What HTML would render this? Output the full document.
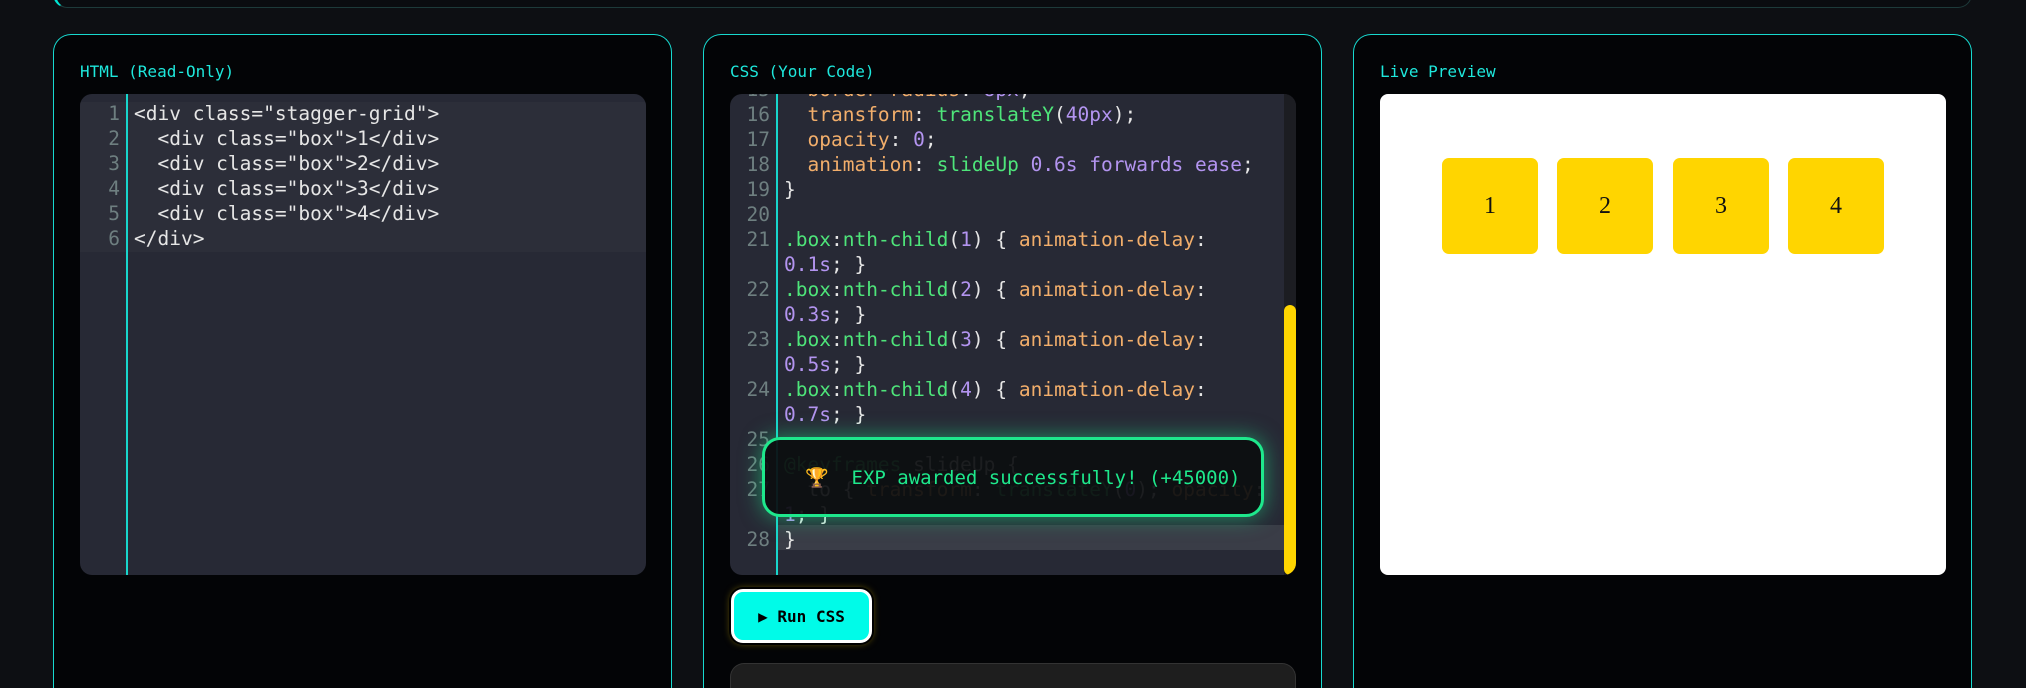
<!DOCTYPE html>
<html style="overflow:hidden;width:2026px;height:688px"><head><meta charset="utf-8"><style>
*{box-sizing:border-box;margin:0;padding:0}
body{width:2026px;height:688px;background:#0d0f13;overflow:hidden;position:relative;font-family:"DejaVu Sans Mono","Liberation Mono",monospace}
.top{position:absolute;left:53px;top:-40px;width:1919px;height:48px;border:1px solid #1d3a3a;border-left:3px solid #00e5d4;border-radius:14px;background:#0a0c10}
.panel{position:absolute;top:34px;width:619px;height:654px;border:1.5px solid #17d9cf;border-bottom:none;border-radius:18px 18px 0 0;background:#030406;overflow:hidden}
.lbl{position:absolute;left:26px;top:27px;color:#1ee8dc;font-size:16px}
.ed{position:absolute;left:26px;top:59px;width:566px;height:481px;background:#272935;border-radius:12px;overflow:hidden}
.gut{position:absolute;left:46px;top:0;bottom:0;width:1.5px;background:#18d6cc}
.ln{position:absolute;left:0;width:40px;text-align:right;color:#6e7f80;font-size:19.5px;line-height:25px}
.cd{position:absolute;left:54px;color:#e6e6e6;font-size:19.5px;line-height:25px;white-space:pre}
.p{color:#f2ae6b}.g{color:#4ee57a}.n{color:#b394f0}
.box{position:absolute;top:64px;width:96px;height:96px;background:#ffd500;border-radius:7px;font-family:"Liberation Serif",serif;font-size:24px;display:flex;align-items:center;justify-content:center;color:#111}
</style></head><body>
<div class="top"></div>

<div class="panel" style="left:53px">
  <div class="lbl">HTML (Read-Only)</div>
  <div class="ed">
    <div style="position:absolute;left:0;right:0;top:8px;height:150px;background:#2c2e39"></div>
    <div class="gut"></div>
    <div class="ln" style="top:7px">1<br>2<br>3<br>4<br>5<br>6</div>
    <div class="cd" style="top:7px">&lt;div class="stagger-grid"&gt;
  &lt;div class="box"&gt;1&lt;/div&gt;
  &lt;div class="box"&gt;2&lt;/div&gt;
  &lt;div class="box"&gt;3&lt;/div&gt;
  &lt;div class="box"&gt;4&lt;/div&gt;
&lt;/div&gt;</div>
  </div>
</div>

<div class="panel" style="left:703px">
  <div class="lbl">CSS (Your Code)</div>
  <div class="ed">
    <div style="position:absolute;left:46px;right:12px;top:431px;height:25px;background:#3a3d47"></div>
    <div class="gut"></div>
    <div class="ln" style="top:-17px">15<br>16<br>17<br>18<br>19<br>20<br>21<br><br>22<br><br>23<br><br>24<br><br>25<br>26<br>27<br><br>28</div>
    <div class="cd" style="top:-17px;left:54px">  <span class="p">border-radius</span>: <span class="n">8px</span>;
  <span class="p">transform</span>: <span class="g">translateY</span>(<span class="n">40px</span>);
  <span class="p">opacity</span>: <span class="n">0</span>;
  <span class="p">animation</span>: <span class="g">slideUp</span> <span class="n">0.6s</span> <span class="n">forwards</span> <span class="n">ease</span>;
}

<span class="g">.box</span>:<span class="g">nth-child</span>(<span class="n">1</span>) { <span class="p">animation-delay</span>:
<span class="n">0.1s</span>; }
<span class="g">.box</span>:<span class="g">nth-child</span>(<span class="n">2</span>) { <span class="p">animation-delay</span>:
<span class="n">0.3s</span>; }
<span class="g">.box</span>:<span class="g">nth-child</span>(<span class="n">3</span>) { <span class="p">animation-delay</span>:
<span class="n">0.5s</span>; }
<span class="g">.box</span>:<span class="g">nth-child</span>(<span class="n">4</span>) { <span class="p">animation-delay</span>:
<span class="n">0.7s</span>; }

<span class="g">@keyframes</span> slideUp {
  to { <span class="p">transform</span>: <span class="g">translateY</span>(<span class="n">0</span>); <span class="p">opacity</span>:
<span class="n">1</span>; }
}</div>
    <div style="position:absolute;right:0;top:0;width:12px;height:100%;background:#1c1d22"></div>
    <div style="position:absolute;right:0;top:211px;width:12px;height:270px;background:#ffd500;border-radius:6px"></div>
  </div>
  <div style="position:absolute;left:58px;top:402px;width:502px;height:80px;border:3px solid #1ee88c;border-radius:18px;background:rgba(12,14,16,0.93);box-shadow:0 0 22px rgba(30,232,140,0.55);color:#1ee88c;font-size:19px;display:flex;align-items:center;padding-left:40px">🏆&nbsp; EXP awarded successfully! (+45000)</div>
  <div style="position:absolute;left:27px;top:554px;width:141px;height:54px;border:3px solid #fff;border-radius:12px;background:#00fbe8;box-shadow:0 0 0 2px #000,0 0 8px rgba(255,215,0,.5);color:#000;font-size:16px;font-weight:bold;display:flex;align-items:center;justify-content:center">▶&nbsp;Run CSS</div>
  <div style="position:absolute;left:26px;top:628px;width:566px;height:60px;background:#1e1e1e;border:1px solid #333;border-bottom:none;border-radius:14px 14px 0 0"></div>
</div>

<div class="panel" style="left:1353px">
  <div class="lbl">Live Preview</div>
  <div class="ed" style="background:#fff;border-radius:8px">
    <div class="box" style="left:62px">1</div>
    <div class="box" style="left:177px">2</div>
    <div class="box" style="left:293px">3</div>
    <div class="box" style="left:408px">4</div>
  </div>
</div>
</body></html>
